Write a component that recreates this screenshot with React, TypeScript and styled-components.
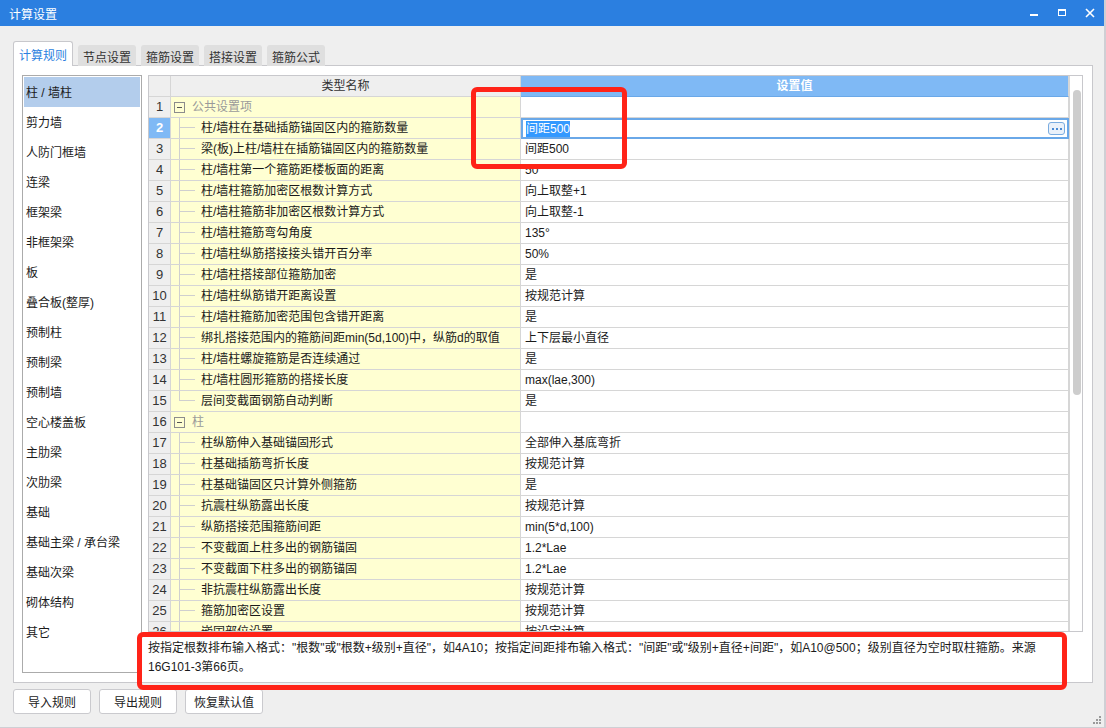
import React from "react";
import styled, { createGlobalStyle } from "styled-components";

const GlobalStyle = createGlobalStyle`
    html, body {
        margin: 0;
        padding: 0;
        background: #efefef;
    }
    body {
        font-family: "Liberation Sans", "Noto Sans CJK SC", sans-serif;
        font-size: 12px;
        color: #222;
    }
`

type Row = {
    name: string,
    value?: string,
    group?: boolean
}

const rows: Row[] = [
    { name: "公共设置项", group: true },
    { name: "柱/墙柱在基础插筋锚固区内的箍筋数量", value: "间距500" },
    { name: "梁(板)上柱/墙柱在插筋锚固区内的箍筋数量", value: "间距500" },
    { name: "柱/墙柱第一个箍筋距楼板面的距离", value: "50" },
    { name: "柱/墙柱箍筋加密区根数计算方式", value: "向上取整+1" },
    { name: "柱/墙柱箍筋非加密区根数计算方式", value: "向上取整-1" },
    { name: "柱/墙柱箍筋弯勾角度", value: "135°" },
    { name: "柱/墙柱纵筋搭接接头错开百分率", value: "50%" },
    { name: "柱/墙柱搭接部位箍筋加密", value: "是" },
    { name: "柱/墙柱纵筋错开距离设置", value: "按规范计算" },
    { name: "柱/墙柱箍筋加密范围包含错开距离", value: "是" },
    { name: "绑扎搭接范围内的箍筋间距min(5d,100)中，纵筋d的取值", value: "上下层最小直径" },
    { name: "柱/墙柱螺旋箍筋是否连续通过", value: "是" },
    { name: "柱/墙柱圆形箍筋的搭接长度", value: "max(lae,300)" },
    { name: "层间变截面钢筋自动判断", value: "是" },
    { name: "柱", group: true },
    { name: "柱纵筋伸入基础锚固形式", value: "全部伸入基底弯折" },
    { name: "柱基础插筋弯折长度", value: "按规范计算" },
    { name: "柱基础锚固区只计算外侧箍筋", value: "是" },
    { name: "抗震柱纵筋露出长度", value: "按规范计算" },
    { name: "纵筋搭接范围箍筋间距", value: "min(5*d,100)" },
    { name: "不变截面上柱多出的钢筋锚固", value: "1.2*Lae" },
    { name: "不变截面下柱多出的钢筋锚固", value: "1.2*Lae" },
    { name: "非抗震柱纵筋露出长度", value: "按规范计算" },
    { name: "箍筋加密区设置", value: "按规范计算" },
    { name: "嵌固部位设置", value: "按设定计算" },
]

const categories = [
    "柱 / 墙柱", "剪力墙", "人防门框墙", "连梁", "框架梁", "非框架梁", "板", "叠合板(整厚)",
    "预制柱", "预制梁", "预制墙", "空心楼盖板", "主肋梁", "次肋梁", "基础", "基础主梁 / 承台梁",
    "基础次梁", "砌体结构", "其它"
]

const tabs = ["计算规则", "节点设置", "箍筋设置", "搭接设置", "箍筋公式"]

const Window = styled.div`
    position: relative;
    width: 1106px;
    height: 728px;
    box-sizing: border-box;
    background: #efefef;
    border-right: 2px solid #cfcfd4;
    border-bottom: 1px solid #cfcfd4;
    display: flex;
    flex-direction: column;
    overflow: hidden;
`

const TitleBar = styled.div`
    height: 26px;
    flex: none;
    background: #2b7fe0;
    color: #fff;
    display: flex;
    align-items: center;
    padding: 0 0 0 9px;
    font-size: 12px;

    .title {
        flex: 1;
    }
`

const WinButton = styled.span`
    width: 28px;
    height: 26px;
    display: flex;
    align-items: center;
    justify-content: center;
`

const Body = styled.div`
    flex: 1;
    display: flex;
    flex-direction: column;
    padding: 16px 0 0 13px;
`

const TabStrip = styled.div`
    display: flex;
    align-items: flex-end;
    gap: 5px;
    height: 24px;
    margin-bottom: -1px;
    position: relative;
    z-index: 1;
`

const Tab = styled.div<{ $active?: boolean }>`
    box-sizing: border-box;
    height: ${p => p.$active ? "25px" : "21px"};
    padding: 0 5px;
    display: flex;
    align-items: center;
    justify-content: center;
    font-size: 12px;
    background: ${p => p.$active ? "#fff" : "#dfdfdf"};
    color: ${p => p.$active ? "#2b7fe0" : "#333"};
    border: ${p => p.$active ? "1px solid #c8c8cc" : "none"};
    border-bottom: none;
    border-radius: 3px 3px 0 0;
    padding-top: ${p => p.$active ? "0" : "1px"};
`

const Panel = styled.div`
    box-sizing: border-box;
    width: 1080px;
    height: 618px;
    background: #fff;
    border: 1px solid #c8c8cc;
    display: flex;
    gap: 6px;
    padding: 9px 9px 9px 8px;
`

const CategoryList = styled.div`
    box-sizing: border-box;
    width: 120px;
    height: 598px;
    border: 1px solid #ababab;
    padding: 1px;
    flex: none;
`

const CategoryItem = styled.div<{ $selected?: boolean }>`
    box-sizing: border-box;
    height: 30px;
    line-height: 28px;
    padding: 2px 0 0 2px;
    font-size: 12px;
    background: ${p => p.$selected ? "#b3cdec" : "transparent"};
    color: #1a1a1a;
    white-space: nowrap;
`

const RightColumn = styled.div`
    flex: none;
    width: 944px;
    display: flex;
    flex-direction: column;
    margin-right: -9px;
`

const GridFrame = styled.div`
    box-sizing: border-box;
    width: 935px;
    height: 557px;
    border: 1px solid #c8c8cc;
    display: flex;
    flex: none;
`

const TableArea = styled.div`
    width: 920px;
    overflow: hidden;
    display: flex;
    flex-direction: column;
`

const GridRow = styled.div`
    display: grid;
    grid-template-columns: 22px 350px 548px;
    height: 21px;
    flex: none;
`

const Cell = styled.div`
    box-sizing: border-box;
    border-right: 1px solid #d6d6d6;
    border-bottom: 1px solid #d6d6d6;
    display: flex;
    align-items: center;
    white-space: nowrap;
    overflow: hidden;
    font-size: 12px;
    line-height: 20px;
`

const HeaderCell = styled(Cell)<{ $accent?: boolean }>`
    justify-content: center;
    background: ${p => p.$accent ? "#7fb9f5" : "#efefef"};
    color: ${p => p.$accent ? "#fff" : "#333"};
    font-weight: ${p => p.$accent ? "bold" : "normal"};
    border-bottom-color: ${p => p.$accent ? "#6aa8e8" : "#d6d6d6"};
`

const NumberCell = styled(Cell)<{ $current?: boolean }>`
    justify-content: center;
    background: ${p => p.$current ? "#7fb9f5" : "#efefef"};
    color: ${p => p.$current ? "#fff" : "#333"};
    font-weight: ${p => p.$current ? "bold" : "normal"};
    font-size: 13px;
`

const NameCell = styled(Cell)<{ $group?: boolean }>`
    background: #ffffd2;
    color: ${p => p.$group ? "#9a9a9a" : "#1a1a1a"};
    padding-left: ${p => p.$group ? "3px" : "0"};
`

const TreeGuide = styled.span<{ $last?: boolean }>`
    position: relative;
    width: 30px;
    height: 21px;
    flex: none;
    margin-top: -1px;

    &::before {
        content: "";
        position: absolute;
        left: 8px;
        top: 0;
        height: ${p => p.$last ? "11px" : "21px"};
        border-left: 1px solid #cfcfcf;
    }
    &::after {
        content: "";
        position: absolute;
        left: 8px;
        width: 16px;
        top: 10px;
        border-top: 1px solid #cfcfcf;
    }
`

const ExpandBox = styled.span`
    box-sizing: border-box;
    width: 11px;
    height: 11px;
    border: 1px solid #8c8c8c;
    margin-right: 7px;
    display: flex;
    align-items: center;
    justify-content: center;
    flex: none;

    &::after {
        content: "";
        width: 5px;
        border-top: 1px solid #555;
    }
`

const ValueCell = styled(Cell)<{ $editing?: boolean }>`
    background: #fff;
    padding-left: ${p => p.$editing ? "3px" : "4px"};
    color: #1a1a1a;
    ${p => p.$editing && `
        border: 2px solid #6aa8e8;
        justify-content: space-between;
        padding-right: 2px;
    `}
`

const Selected = styled.span`
    background: #3399ff;
    color: #fff;
    line-height: 16px;
`

const EllipsisButton = styled.span`
    box-sizing: border-box;
    width: 17px;
    height: 13px;
    border: 1px solid #7aace0;
    border-radius: 3px;
    background: #eaf1fa;
    display: flex;
    align-items: center;
    justify-content: center;
    gap: 2px;

    i {
        width: 2px;
        height: 2px;
        background: #4a8ad4;
    }
`

const ScrollTrack = styled.div`
    width: 13px;
    flex: none;
    border-left: 1px solid #d6d6d6;
    background: #fff;
    padding: 14px 0 0 3px;
    box-sizing: border-box;
`

const ScrollThumb = styled.div`
    width: 8px;
    height: 305px;
    border-radius: 4px;
    background: #cdcdcd;
`

const Description = styled.div`
    padding: 7px 0 0 0;
    font-size: 12px;
    line-height: 19px;
    color: #1a1a1a;
    white-space: nowrap;
`

const ButtonRow = styled.div`
    display: flex;
    gap: 8px;
    margin-top: 6px;
`

const Button = styled.button`
    width: 78px;
    height: 25px;
    background: #fff;
    border: 1px solid #cacace;
    border-radius: 3px;
    font-family: "Liberation Sans", "Noto Sans CJK SC", sans-serif;
    font-size: 12px;
    color: #222;
    padding: 0;
`

const Annotation = styled.div`
    position: absolute;
    box-sizing: border-box;
    border: 5px solid #ff2318;
    border-radius: 6px;
    pointer-events: none;
`

const ResizeGrip = styled.svg`
    position: absolute;
    right: 2px;
    bottom: 2px;
`

export default function App() {
    return <>
        <GlobalStyle />
        <Window>
            <TitleBar>
                <span className="title">计算设置</span>
                <WinButton>
                    <svg width="10" height="10" viewBox="0 0 10 10"><rect x="1" y="6" width="8" height="2" fill="#fff" /></svg>
                </WinButton>
                <WinButton>
                    <svg width="10" height="10" viewBox="0 0 10 10"><rect x="1.5" y="1.5" width="7" height="6" fill="none" stroke="#fff" /><rect x="1" y="1" width="8" height="2" fill="#fff" /></svg>
                </WinButton>
                <WinButton>
                    <svg width="10" height="10" viewBox="0 0 10 10"><path d="M1 1 L9 9 M9 1 L1 9" stroke="#fff" strokeWidth="1.6" /></svg>
                </WinButton>
            </TitleBar>
            <Body>
                <TabStrip>
                    {tabs.map((t, i) => <Tab key={t} $active={i === 0}>{t}</Tab>)}
                </TabStrip>
                <Panel>
                    <CategoryList>
                        {categories.map((c, i) => <CategoryItem key={c} $selected={i === 0}>{c}</CategoryItem>)}
                    </CategoryList>
                    <RightColumn>
                        <GridFrame>
                            <TableArea>
                                <GridRow>
                                    <HeaderCell />
                                    <HeaderCell>类型名称</HeaderCell>
                                    <HeaderCell $accent>设置值</HeaderCell>
                                </GridRow>
                                {rows.map((r, i) => <GridRow key={i}>
                                    <NumberCell $current={i === 1}>{i + 1}</NumberCell>
                                    {r.group
                                        ? <NameCell $group><ExpandBox />{r.name}</NameCell>
                                        : <NameCell><TreeGuide $last={i === 14} />{r.name}</NameCell>}
                                    {i === 1
                                        ? <ValueCell $editing><Selected>{r.value}</Selected><EllipsisButton><i /><i /><i /></EllipsisButton></ValueCell>
                                        : <ValueCell>{r.value}</ValueCell>}
                                </GridRow>)}
                            </TableArea>
                            <ScrollTrack><ScrollThumb /></ScrollTrack>
                        </GridFrame>
                        <Description>
                            按指定根数排布输入格式："根数"或"根数+级别+直径"，如4A10；按指定间距排布输入格式："间距"或"级别+直径+间距"，如A10@500；级别直径为空时取柱箍筋。来源<br />
                            16G101-3第66页。
                        </Description>
                    </RightColumn>
                </Panel>
                <ButtonRow>
                    <Button>导入规则</Button>
                    <Button>导出规则</Button>
                    <Button>恢复默认值</Button>
                </ButtonRow>
            </Body>
            <Annotation style={{ left: 471, top: 87, width: 156, height: 82 }} />
            <Annotation style={{ left: 137, top: 632, width: 930, height: 58 }} />
            <ResizeGrip width="9" height="9" viewBox="0 0 9 9">
                <rect x="6" y="0" width="2" height="2" fill="#9a9a9a" />
                <rect x="3" y="3" width="2" height="2" fill="#9a9a9a" />
                <rect x="6" y="3" width="2" height="2" fill="#9a9a9a" />
                <rect x="0" y="6" width="2" height="2" fill="#9a9a9a" />
                <rect x="3" y="6" width="2" height="2" fill="#9a9a9a" />
                <rect x="6" y="6" width="2" height="2" fill="#9a9a9a" />
            </ResizeGrip>
        </Window>
    </>
}
